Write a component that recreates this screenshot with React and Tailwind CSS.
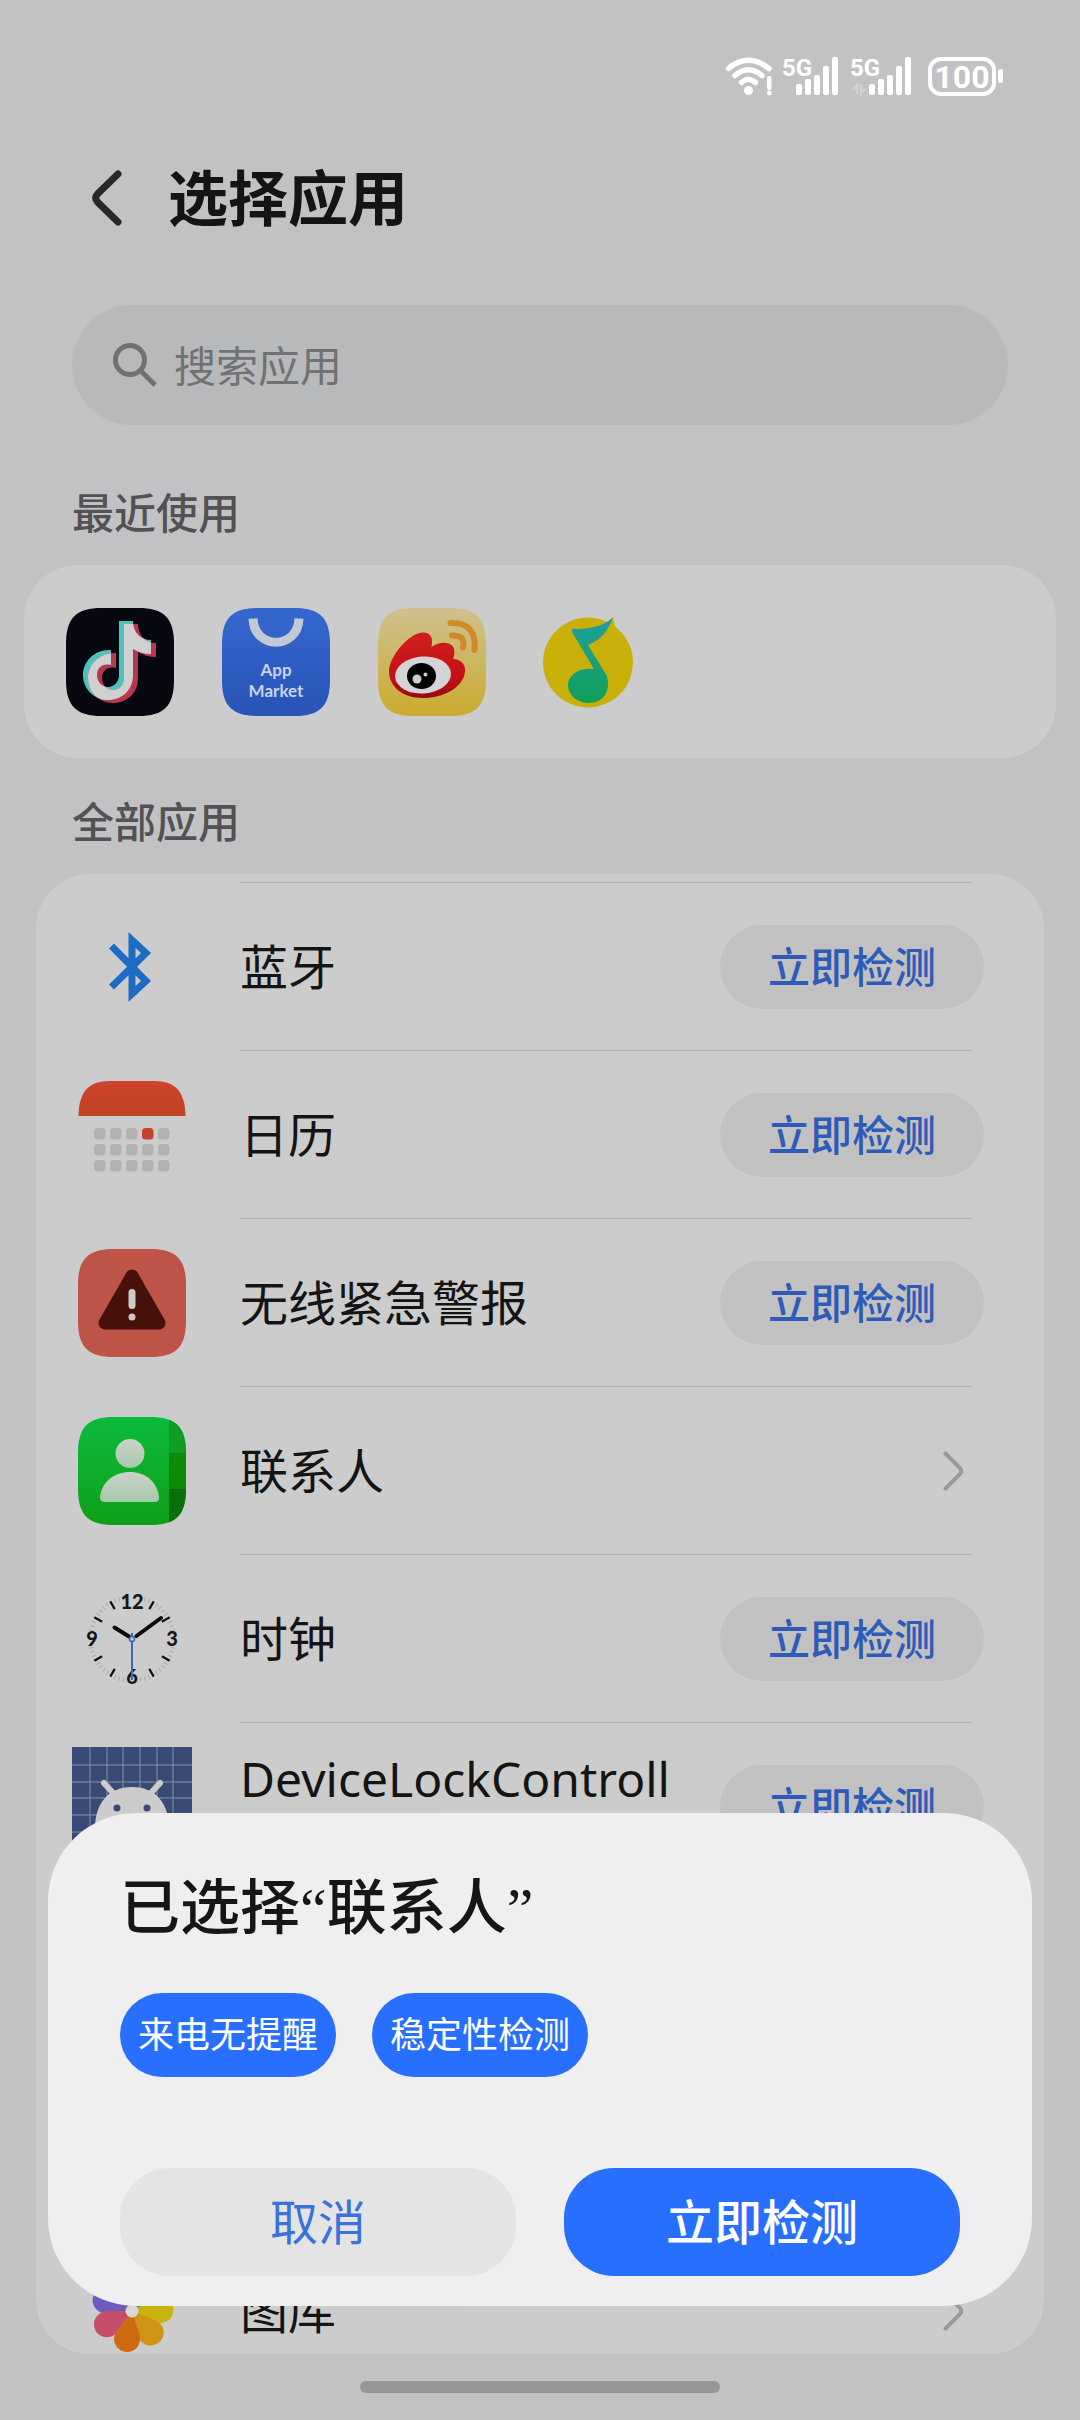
// src/pages/AppSelect.jsx
import { useState } from 'react';

const FONT = "font-['Noto_Sans','Noto_Sans_CJK_SC',sans-serif]";

const SignalBars = ({ x = 0 }) => (
  <g fill="#fff" transform={`translate(${x} 0)`}>
    <rect x="13" y="27" width="6" height="11" rx="2" />
    <rect x="22" y="22" width="6" height="16" rx="2" />
    <rect x="31" y="18" width="6" height="20" rx="2" />
    <rect x="40" y="9" width="6" height="29" rx="2" />
    <rect x="49" y="0" width="6" height="38" rx="2" />
  </g>
);

function StatusBar() {
  return (
    <div className="h-[150px] flex items-start justify-end pt-[57px] pr-[76px]">
      <svg width="50" height="39" viewBox="0 0 50 39" aria-label="WiFi">
        <g fill="none" stroke="#fff" strokeWidth="5.5" strokeLinecap="round">
          <path d="M3.500 11.500Q23-5 44 11.500" />
          <path d="M10 18.500Q23 7 37 18.500" />
          <path d="M16.500 25.500Q23 19.500 30.500 25.500" />
        </g>
        <circle cx="23.500" cy="33.500" r="4.500" fill="#fff" />
        <rect x="42" y="19" width="4.500" height="14" rx="2" fill="#fff" />
        <circle cx="44.300" cy="36" r="2.400" fill="#fff" />
      </svg>
      <svg className="ml-2 overflow-visible" width="57" height="39" viewBox="0 0 57 39" aria-label="5G">
        <text x="-1" y="19" fontFamily="Roboto" fontWeight="700" fontSize="24" fill="#fff">5G</text>
        <SignalBars />
      </svg>
      <svg className="ml-[11px] overflow-visible" width="62" height="39" viewBox="0 0 62 39" aria-label="5G">
        <text x="-1" y="19" fontFamily="Roboto" fontWeight="700" fontSize="24" fill="#fff">5G</text>
        <path d="M2 33L6 28V37M10 27V37L14 32" fill="none" stroke="#d3d3d4" strokeWidth="2.500" />
        <SignalBars x={5} />
      </svg>
      <svg className="ml-[15px] overflow-visible" width="76" height="39" viewBox="0 0 76 39" aria-label="电量">
        <rect x="2" y="2" width="64" height="35" rx="11" fill="none" stroke="#fff" strokeWidth="4" />
        <rect x="70" y="12" width="5" height="14" rx="2.500" fill="#fff" />
        <text x="34" y="31" fontFamily="Roboto" fontWeight="700" fontSize="32" textAnchor="middle" fill="#fff">100</text>
      </svg>
    </div>
  );
}

// rounded "squircle" shared by the launcher icons
const TILE = 'M36 0H72C98 0 108 10 108 36V72C108 98 98 108 72 108H36C10 108 0 98 0 72V36C0 10 10 0 36 0Z';

const NOTE = 'M54 13H68C68 24 75 32 86 32V46C79 46 73 44 68 41V67C68 82 57 92 43 92C29 92 18 81 18 67C18 53 30 41 46 42V57C37 55 32 60 32 67C32 74 37 79 43 79C49 79 54 74 54 67Z';

function DouyinIcon() {
  return (
    <svg width="108" height="108" viewBox="0 0 108 108">
      <defs>
        <clipPath id="noteOverlap">
          <path d={NOTE} transform="translate(4 3)" />
        </clipPath>
      </defs>
      <path d={TILE} fill="#070810" />
      <path d={NOTE} fill="#4fc3bb" transform="translate(-1 0)" />
      <path d={NOTE} fill="#b8374f" transform="translate(4 3)" />
      <g clipPath="url(#noteOverlap)">
        <path d={NOTE} fill="#d0cfd2" transform="translate(-1 0)" />
      </g>
    </svg>
  );
}

function AppMarketIcon() {
  return (
    <svg width="108" height="108" viewBox="0 0 108 108">
      <defs>
        <linearGradient id="market" x1="0" y1="0" x2="0" y2="1">
          <stop offset="0" stopColor="#3568cf" />
          <stop offset="1" stopColor="#2853b7" />
        </linearGradient>
      </defs>
      <path d={TILE} fill="url(#market)" />
      <path d="M31 10.500C32 42 76 42 77 10.500" fill="none" stroke="#c3c8d6" strokeWidth="9" />
      <g fill="#c8d3ee" fontFamily="Lato" fontWeight="700" fontSize="17" textAnchor="middle">
        <text x="54" y="68">App</text>
        <text x="54" y="89">Market</text>
      </g>
    </svg>
  );
}

function WeiboIcon() {
  return (
    <svg width="108" height="108" viewBox="0 0 108 108">
      <defs>
        <linearGradient id="weibo" x1="0" y1="0" x2="0" y2="1">
          <stop offset="0" stopColor="#cfc18f" />
          <stop offset="1" stopColor="#cbab2f" />
        </linearGradient>
        <linearGradient id="weiboRed" x1="0" y1="0" x2="0" y2="1">
          <stop offset="0" stopColor="#cf1f1d" />
          <stop offset="0.700" stopColor="#c41016" />
          <stop offset="1" stopColor="#940b10" />
        </linearGradient>
      </defs>
      <path d={TILE} fill="url(#weibo)" />
      <path d="M11 63C11 50 30 25 45 24.500C54 24.500 55 31 53.500 39C61 33 74 33 76 41C77 45 76 48 75 51C83 51 88 57 87 64C85 80 65 90 45 90C25 90 11 79 11 63Z" fill="url(#weiboRed)" />
      <ellipse cx="45" cy="67" rx="28" ry="18.500" fill="#d4d4d8" transform="rotate(-4 45 67)" />
      <ellipse cx="43.500" cy="68" rx="14.500" ry="13" fill="#000" />
      <circle cx="39" cy="71" r="4.500" fill="#ccc" />
      <circle cx="47.500" cy="66.500" r="2" fill="#ccc" />
      <g fill="none" stroke="#d08a27" strokeWidth="6" strokeLinecap="round">
        <path d="M72.500 15Q99 14 96.500 42" />
        <path d="M74 27.500Q88 27 85 39.500" />
      </g>
    </svg>
  );
}

function QQMusicIcon() {
  return (
    <svg width="108" height="108" viewBox="0 0 108 108">
      <defs>
        <linearGradient id="qqNote" x1="0" y1="0" x2="0" y2="1">
          <stop offset="0" stopColor="#1f9fa0" />
          <stop offset="1" stopColor="#119f57" />
        </linearGradient>
      </defs>
      <circle cx="54" cy="54.500" r="45" fill="#c9b008" />
      <path d="M79 9L71 16L84 24Q80 18 79 9Z" fill="#c9b008" />
      <path d="M79 9.500C74 22 69 31 54 37L73 68C77 82 70 95 55 95C43 95 34 87 34 77C34 67 45 59 60 61L38 24C37 21 39 20.500 41 21C55 21 68 19 79 9.500Z" fill="url(#qqNote)" />
    </svg>
  );
}

function BluetoothIcon() {
  return (
    <svg width="108" height="108" viewBox="0 0 108 108">
      <path d="M33.500 33L68 68L54 81V27L68 40L33.500 74" fill="none" stroke="#1d6cc4" strokeWidth="7" />
    </svg>
  );
}

function CalendarIcon() {
  return (
    <svg width="108" height="108" viewBox="0 0 108 108">
      <defs>
        <linearGradient id="cal" x1="0" y1="0" x2="0" y2="1">
          <stop offset="0" stopColor="#cf432e" />
          <stop offset="1" stopColor="#bd4322" />
        </linearGradient>
      </defs>
      <path d="M0.500 35C1 11 10 0 32 0H76C98 0 107 11 107.500 35Z" fill="url(#cal)" />
      {[0, 1, 2].map((row) =>
        [0, 1, 2, 3, 4].map((col) => (
          <rect
            key={`${row}-${col}`}
            x={16 + col * 16}
            y={47 + row * 16}
            width="11.500"
            height="11.500"
            rx="3.500"
            fill={row === 0 && col === 3 ? '#c4452d' : '#b2b2b2'}
          />
        ))
      )}
    </svg>
  );
}

function AlertIcon() {
  return (
    <svg width="108" height="108" viewBox="0 0 108 108">
      <path d={TILE} fill="#be5347" />
      <path d="M54 27L81 74H27Z" fill="#48100a" stroke="#48100a" strokeWidth="13" strokeLinejoin="round" />
      <rect x="50.500" y="40" width="7" height="20" rx="3.500" fill="#ccc" />
      <circle cx="54" cy="68" r="3.500" fill="#ccc" />
    </svg>
  );
}

function ContactsIcon() {
  return (
    <svg width="108" height="108" viewBox="0 0 108 108">
      <defs>
        <linearGradient id="contacts" x1="0" y1="0" x2="0" y2="1">
          <stop offset="0" stopColor="#0cbb3d" />
          <stop offset="1" stopColor="#0f9f19" />
        </linearGradient>
        <linearGradient id="person" x1="0" y1="0" x2="0" y2="1">
          <stop offset="0" stopColor="#ccd2cc" />
          <stop offset="1" stopColor="#a6c8a9" />
        </linearGradient>
        <clipPath id="contactsTile">
          <path d={TILE} />
        </clipPath>
      </defs>
      <g clipPath="url(#contactsTile)">
        <rect width="108" height="108" fill="url(#contacts)" />
        <rect x="91" width="17" height="36" fill="#109d25" />
        <rect x="91" y="36" width="17" height="36" fill="#0d8a08" />
        <rect x="91" y="72" width="17" height="36" fill="#0b6f0c" />
      </g>
      <circle cx="52" cy="36.500" r="14.500" fill="url(#person)" />
      <path d="M22 80C24 64 37 55 52 55S79 64 81 80Q81.500 85 77 85H27Q22 85 22 80Z" fill="url(#person)" />
    </svg>
  );
}

function ClockIcon() {
  const ticks = Array.from({ length: 60 }, (_, i) => i);
  return (
    <svg width="108" height="108" viewBox="0 0 108 108">
      {ticks.filter((i) => i % 15 > 1 && i % 15 < 14).map((i) => (
        <line
          key={i}
          x1="54"
          x2="54"
          y1={i % 5 ? 10 : 10.500}
          y2={i % 5 ? 14.500 : 19.500}
          stroke={i % 5 ? '#a9a9a9' : '#111'}
          strokeWidth={i % 5 ? 1 : 2.200}
          transform={`rotate(${i * 6} 54 54)`}
        />
      ))}
      <g fontFamily="Lato" fontWeight="900" fontSize="20" textAnchor="middle" fill="#161616">
        <text x="54" y="24">12</text>
        <text x="94" y="61">3</text>
        <text x="54" y="99">6</text>
        <text x="14" y="61">9</text>
      </g>
      <g fill="none" stroke="#0a0a0a" strokeWidth="4" strokeLinecap="round">
        <path d="M51 51.500L36.500 42.500" />
        <path d="M58.500 51L83 33" />
      </g>
      <circle cx="54" cy="54" r="2.500" fill="none" stroke="#3766c4" strokeWidth="1.500" />
      <path d="M54 48V51.500M54 56.500V95" stroke="#3766c4" strokeWidth="2" />
    </svg>
  );
}

function AndroidIcon() {
  const lines = [18, 35, 51, 68, 85, 101];
  return (
    <svg width="120" height="120" viewBox="0 0 120 120">
      <rect width="120" height="120" fill="#394b75" />
      {lines.map((n) => (
        <path key={n} d={`M${n} 0V120M0 ${n}H120`} stroke="#8690ad" strokeWidth="1" />
      ))}
      <path d="M32 36L42 47M88 36L78 47" stroke="#ccc" strokeWidth="6" strokeLinecap="round" />
      <path d="M23 77C25 53 39 40 60 40S95 53 97 77Z" fill="#ccc" />
      <circle cx="45" cy="61" r="3.500" fill="#394b75" />
      <circle cx="75" cy="61" r="3.500" fill="#394b75" />
    </svg>
  );
}

function GalleryIcon() {
  const petals = [
    ['#2a9fb0', 346],
    ['#2aa36b', 37],
    ['#6e5bbd', 292],
    ['#c9b30f', 88],
    ['#cf9414', 139],
    ['#c84d68', 242],
    ['#cf6a12', 190],
  ];
  return (
    <svg width="108" height="108" viewBox="0 0 108 108">
      {petals.map(([color, angle]) => (
        <path
          key={color}
          d="M54 54L42.400 31.400A13 13 0 1 1 65.600 31.400Z"
          fill={color}
          transform={`rotate(${angle} 54 54)`}
        />
      ))}
      <circle cx="54" cy="54" r="6.500" fill="#d8d8d8" />
    </svg>
  );
}

const apps = [
  { name: '蓝牙', icon: BluetoothIcon, check: true },
  { name: '日历', icon: CalendarIcon, check: true },
  { name: '无线紧急警报', icon: AlertIcon, check: true },
  { name: '联系人', icon: ContactsIcon, check: false },
  { name: '时钟', icon: ClockIcon, check: true },
  { name: 'DeviceLockControll', icon: AndroidIcon, check: true, tall: true },
];

function AppRow({ name, icon: Icon, check, tall }) {
  return (
    <li className="flex h-[168px] items-center">
      <div className="flex w-[204px] shrink-0 items-center justify-center pt-0.5 pr-3">
        <Icon />
      </div>
      <div className="mr-[72px] flex h-full flex-1 items-center border-t border-[#b0b0b1]">
        <span className={`flex-1 whitespace-nowrap text-[48px] leading-[56px] text-[#141414] ${tall ? 'h-[112px]' : ''}`}>
          {name}
        </span>
        {check ? (
          <button className="-mr-3 h-[84px] w-[264px] shrink-0 rounded-full bg-[#c1c1c1] text-[42px] font-medium text-[#2f5bb8]">
            立即检测
          </button>
        ) : (
          <svg className="mr-2" width="21" height="40" viewBox="0 0 21 40" fill="none" stroke="#9a9a9a" strokeWidth="4" strokeLinecap="round">
            <path d="M2.500 2.500L17 17Q19.500 20 17 23L2.500 37.500" />
          </svg>
        )}
      </div>
    </li>
  );
}

export default function App() {
  const [keyword, setKeyword] = useState('');

  return (
    <div className={`relative flex h-screen flex-col overflow-hidden bg-[#c2c2c4] ${FONT}`}>
      <StatusBar />

      <header className="flex h-[96px] items-center pl-[92px]">
        <button aria-label="返回">
          <svg width="30" height="56" viewBox="0 0 30 56" fill="none" stroke="#29292a" strokeWidth="7" strokeLinecap="round">
            <path d="M26 4L5.500 24Q2 28 5.500 32L26 52" />
          </svg>
        </button>
        <h1 className="ml-[46px] text-[60px] font-bold leading-[72px] text-[#141415]">选择应用</h1>
      </header>

      <label className="mx-[72px] mt-[59px] flex h-[120px] shrink-0 items-center rounded-full bg-[#b8b9bb] pl-[40px]">
        <svg width="46" height="46" viewBox="0 0 46 46" fill="none" stroke="#707172" strokeWidth="5">
          <circle cx="18" cy="18" r="14.500" />
          <path d="M28 28L43 43" />
        </svg>
        <input
          type="text"
          aria-label="搜索应用"
          placeholder="搜索应用"
          value={keyword}
          onChange={(e) => setKeyword(e.target.value)}
          className="ml-4 flex-1 bg-transparent text-[42px] text-[#707172] outline-none placeholder:text-[#717273]"
        />
      </label>

      <h2 className="mt-[60px] pl-[72px] text-[42px] font-medium leading-[56px] text-[#525254]">最近使用</h2>
      <section className="mx-6 mt-6 flex shrink-0 gap-12 rounded-[54px] bg-[#ccc] px-[42px] pt-[43px] pb-[42px]">
        <DouyinIcon />
        <AppMarketIcon />
        <WeiboIcon />
        <QQMusicIcon />
      </section>

      <h2 className="mt-9 pl-[72px] text-[42px] font-medium leading-[56px] text-[#525254]">全部应用</h2>
      <section className="mx-9 mt-6 mb-[66px] min-h-0 flex-1 overflow-hidden rounded-[54px] bg-[#ccc] pt-2">
        <ul>
          {apps.map((app) => (
            <AppRow key={app.name} {...app} />
          ))}
          <li className="h-[336px]" aria-hidden="true" />
          <AppRow name="图库" icon={GalleryIcon} check={false} />
        </ul>
      </section>

      {/* confirm sheet */}
      <div
        role="dialog"
        aria-labelledby="sheet-title"
        className="absolute inset-x-12 bottom-[114px] rounded-[88px] bg-linear-to-r from-[#efeef0] via-[#efefef] to-[#efeff2] px-[72px] pt-[60px] pb-[30px]"
      >
        <h2
          id="sheet-title"
          className="font-['Liberation_Serif','Noto_Sans_CJK_SC',sans-serif] text-[60px] font-medium leading-[72px] text-[#161617]"
        >
          已选择“联系人”
        </h2>
        <div className="mt-12 flex gap-9">
          <button className="h-[84px] w-[216px] rounded-full bg-[#286fff] text-[36px] text-white">来电无提醒</button>
          <button className="h-[84px] w-[216px] rounded-full bg-[#286fff] text-[36px] text-white">稳定性检测</button>
        </div>
        <div className="mt-[91px] grid grid-cols-2 gap-12">
          <button className="h-[108px] rounded-[50px] bg-[#e4e4e4] text-[48px] text-[#3a72dc]">取消</button>
          <button className="h-[108px] rounded-[50px] bg-[#286fff] text-[48px] font-medium text-white">立即检测</button>
        </div>
      </div>

      <div className="absolute bottom-[27px] left-1/2 h-3 w-[360px] -translate-x-1/2 rounded-full bg-[#969696]" />
    </div>
  );
}
